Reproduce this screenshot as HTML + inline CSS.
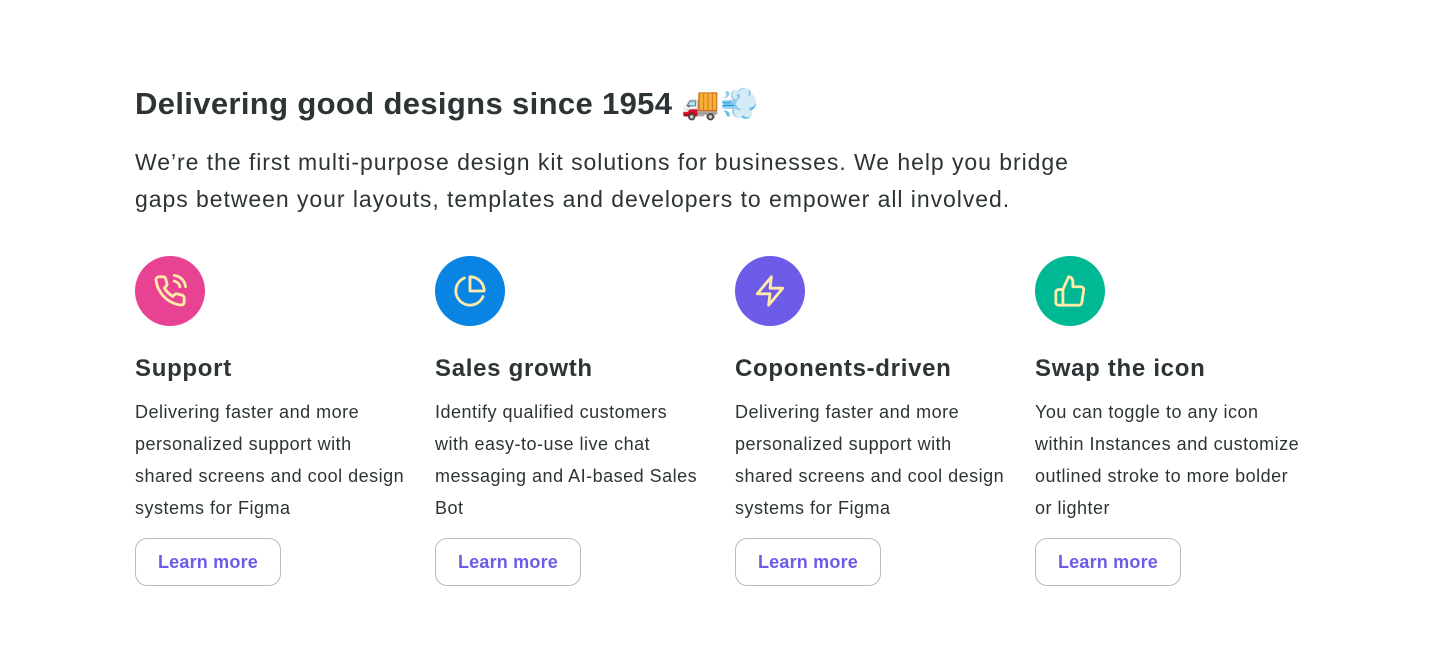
<!DOCTYPE html>
<html><head><meta charset="utf-8"><style>
*{margin:0;padding:0;box-sizing:border-box}
body{width:1440px;height:666px;background:#fff;font-family:"Liberation Sans",sans-serif;color:#2d3436;position:relative;overflow:hidden}
h1{position:absolute;left:135px;top:85px;font-size:31px;font-weight:700;letter-spacing:0.35px;color:#2d3436}
.lead{position:absolute;left:135px;top:144px;white-space:nowrap;font-size:23px;line-height:37px;letter-spacing:0.95px;color:#2d3436}
.col{position:absolute;top:256px;width:280px}
.ic{width:70px;height:70px;border-radius:50%;display:flex;align-items:center;justify-content:center}
.col h3{margin-top:28px;font-size:24px;font-weight:700;line-height:30px;letter-spacing:0.7px}
.col p{margin-top:12px;white-space:nowrap;font-size:18px;line-height:32px;letter-spacing:0.5px;color:#2d3436}
.btn{position:absolute;top:282px;left:0;width:146px;height:48px;border:1px solid #b2bec3;border-radius:12px;display:flex;align-items:center;justify-content:center;color:#6c5ce7;font-weight:700;font-size:18px;letter-spacing:0.2px}
svg{fill:none;stroke:#ffeaa7;stroke-width:2;stroke-linecap:round;stroke-linejoin:round}
</style></head><body>
<h1>Delivering good designs since 1954 🚚💨</h1>
<div class="lead">We’re the first multi-purpose design kit solutions for businesses. We help you bridge<br>gaps between your layouts, templates and developers to empower all involved.</div>

<div class="col" style="left:135px">
<div class="ic" style="background:#e84393"><svg width="34" height="34" viewBox="0 0 24 24"><path d="M22 16.9v3a2 2 0 0 1-2.2 2 19.8 19.8 0 0 1-8.6-3.1 19.5 19.5 0 0 1-6-6A19.8 19.8 0 0 1 2.1 4.2 2 2 0 0 1 4.1 2h3a2 2 0 0 1 2 1.7c.1 1 .4 1.9.7 2.8a2 2 0 0 1-.5 2.1L8 9.8a16 16 0 0 0 6 6l1.3-1.3a2 2 0 0 1 2.1-.4c.9.3 1.8.6 2.8.7a2 2 0 0 1 1.7 2z"/><path d="M15 5a5 5 0 0 1 4 4M15 1a9 9 0 0 1 8 8"/></svg></div>
<h3>Support</h3>
<p>Delivering faster and more<br>personalized support with<br>shared screens and cool design<br>systems for Figma</p>
<div class="btn">Learn more</div></div>

<div class="col" style="left:435px">
<div class="ic" style="background:#0984e3"><svg width="34" height="34" viewBox="0 0 24 24"><path d="M21.2 15.9A10 10 0 1 1 8 2.8"/><path d="M22 12A10 10 0 0 0 12 2v10z"/></svg></div>
<h3>Sales growth</h3>
<p>Identify qualified customers<br>with easy-to-use live chat<br>messaging and AI-based Sales<br>Bot</p>
<div class="btn">Learn more</div></div>

<div class="col" style="left:735px">
<div class="ic" style="background:#6c5ce7"><svg width="34" height="34" viewBox="0 0 24 24"><path d="M13 2L3 14h9l-1 8 10-12h-9l1-8z"/></svg></div>
<h3>Coponents-driven</h3>
<p>Delivering faster and more<br>personalized support with<br>shared screens and cool design<br>systems for Figma</p>
<div class="btn">Learn more</div></div>

<div class="col" style="left:1035px">
<div class="ic" style="background:#00b894"><svg width="34" height="34" viewBox="0 0 24 24"><path d="M14 9V5a3 3 0 0 0-3-3l-4 9v11h11.3a2 2 0 0 0 2-1.7l1.4-9a2 2 0 0 0-2-2.3zM7 22H4a2 2 0 0 1-2-2v-7a2 2 0 0 1 2-2h3"/></svg></div>
<h3>Swap the icon</h3>
<p>You can toggle to any icon<br>within Instances and customize<br>outlined stroke to more bolder<br>or lighter</p>
<div class="btn">Learn more</div></div>
</body></html>
